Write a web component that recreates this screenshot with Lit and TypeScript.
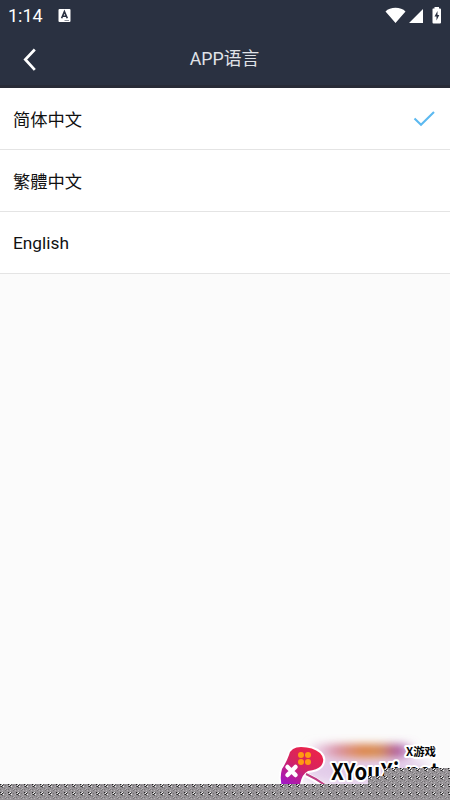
import { LitElement, html, css } from "lit";
import { customElement } from "lit/decorators.js";

@customElement("app-root")
export class AppRoot extends LitElement {
  static styles = css`
    :host {
      display: flex;
      flex-direction: column;
      position: relative;
      height: 800px;
      overflow: hidden;
      background: #fbfbfb;
      font-family: Roboto, "Noto Sans CJK SC", sans-serif;
      color: #111;
    }
    header { background: #2a3141; height: 88px; box-sizing: border-box; border-bottom: 3px solid #282b36; }
    .status { display: flex; height: 31px; align-items: center; padding: 0 8px; color: #fff; font-size: 18px; line-height: 32px; }
    .time { width: 50px; }
    .icons { margin-left: auto; margin-right: -8px; display: block; }
    .nav { display: grid; grid-template-columns: 60px 1fr 60px; height: 54px; align-items: center; }
    .title { text-align: center; font-size: 17.8px; line-height: 56px; color: #e0e3e8; margin-left: -1px; }
    .row { display: flex; align-items: center; justify-content: space-between; height: 62px; box-sizing: border-box; border-bottom: 1px solid #e4e4e4; background: #fff; padding: 0 13px; font-size: 17.3px; }
    .mark { position: absolute; left: 0; bottom: 0; }
    .brand { font-family: "Noto Sans CJK SC", sans-serif; font-weight: 700; fill: #050505; }
    svg { display: block; }
  `;

  render() {
    return html`
      <header>
        <div class="status">
          <span class="time">1:14</span>
          <svg width="13" height="14" viewBox="0 0 13 14">
            <rect x=".5" y="0" width="12" height="13" rx="1" fill="#fff" />
            <path d="M3.6 9.2 6.4 2.6 9.3 9.2M4.5 7.2H8.2" fill="none" stroke="#2a3141" stroke-width="1.6" />
            <path d="M6.5 11.5H11" stroke="#8b909b" />
          </svg>
          <svg class="icons" width="80" height="30" viewBox="0 0 80 30">
            <path d="M15.5 10.5C20 5.5 31 5.5 35.5 10.5L25.5 22Z M53 8V22H39Z" fill="#fff" />
            <path d="M64.5 6V7.5H63Q62.5 7.5 62.5 8.5V21.5Q62.5 22.5 63.5 22.5H70Q71 22.5 71 21.5V8.5Q71 7.5 70 7.5H69V6Z" fill="#fff" />
            <path d="M67.5 10 64.5 15.5H66.5V19.5L69.3 14H67.5Z" fill="#2a3141" />
          </svg>
        </div>
        <div class="nav">
          <svg width="60" height="54" viewBox="0 0 60 54"><path d="M34.8 17.5 25.3 27.5 34.8 37.8" fill="none" stroke="#fff" stroke-width="2.7" /></svg>
          <span class="title">APP语言</span>
        </div>
      </header>
      <div class="row"><span>简体中文</span>
        <svg width="24" height="18" viewBox="0 0 24 18"><path d="M1.5 8.5 8 14.8 21 2" fill="none" stroke="#5cb9f0" stroke-width="2.1" /></svg>
      </div>
      <div class="row"><span lang="zh-Hant">繁體中文</span></div>
      <div class="row"><span>English</span></div>
      <svg class="mark" width="450" height="72" viewBox="0 728 450 72">
        <defs>
          <filter id="soft" x="-30%" y="-100%" width="160%" height="300%"><feGaussianBlur stdDeviation="6 4" /></filter>
          <filter id="haze" x="-30%" y="-60%" width="160%" height="220%"><feGaussianBlur stdDeviation="7" /></filter>
          <linearGradient id="glow"><stop stop-color="#dfb4df" stop-opacity=".4" /><stop offset=".25" stop-color="#d890a5" /><stop offset=".5" stop-color="#dd8446" /><stop offset=".7" stop-color="#d58b55" /><stop offset=".88" stop-color="#a8509e" /><stop offset="1" stop-color="#b878ba" stop-opacity=".6" /></linearGradient>
          <linearGradient id="pad" x1=".8" y1="0" x2=".2" y2="1"><stop stop-color="#ee2348" /><stop offset=".45" stop-color="#d5245f" /><stop offset="1" stop-color="#9b18cf" /></linearGradient>
          <pattern id="grain" width="8" height="8" patternUnits="userSpaceOnUse">
            <rect width="8" height="8" fill="#979397" />
            <g shape-rendering="crispEdges">
              <path d="M0 0h1v1H0ZM2 1h1v1H2ZM1 2h1v1H1Z" fill="#222" />
              <path d="M3 0h1v1H3ZM0 2h1v1H0ZM2 3h1v1H2Z" fill="#5c5a5c" />
              <path d="M2 0h1v1H2ZM1 1h1v1H1ZM3 2h1v1H3Z" fill="#eee" />
              <path d="M4 4h1v1H4ZM6 5h1v1H6ZM5 6h1v1H5ZM0 5h1v1H0ZM5 1h1v1H5Z" fill="#777477" />
              <path d="M6 4h1v1H6ZM5 5h1v1H5ZM7 6h1v1H7ZM2 6h1v1H2ZM7 2h1v1H7Z" fill="#b5b2b5" />
            </g>
          </pattern>
        </defs>
        <ellipse cx="364" cy="770" rx="64" ry="18" fill="#d5b2e0" opacity=".65" filter="url(#haze)" />
        <rect x="312" y="744" width="98" height="14" fill="url(#glow)" filter="url(#soft)" />
        <path d="M289 755Q291 747 301 747Q313 747 320 753Q326 759 321 766Q317 770 308 771Q302 774 300 784L297 790H283Q279 779 282 769Q286 763 289 755Z" fill="url(#pad)" stroke="#fff" stroke-width="4" paint-order="stroke" />
        <path d="M306 775Q314 778 324 786" fill="none" stroke="#fff" stroke-width="5" />
        <path d="M306 774Q315 778 325 785" fill="none" stroke="#bd3d83" stroke-width="2" />
        <g fill="#ff9b12"><circle cx="301" cy="755" r="3" /><circle cx="308" cy="755" r="3" /><circle cx="301" cy="762" r="3" /><circle cx="308" cy="762" r="3" /></g>
        <path d="m287.5 767 8 8m0-8-8 8" stroke="#fff" stroke-width="4.5" stroke-linecap="round" />
        <text class="brand" x="331" y="780" font-size="23" textLength="108" lengthAdjust="spacingAndGlyphs" stroke="#fff" stroke-width="4" stroke-linejoin="round" paint-order="stroke">XYouXi.net</text>
        <text class="brand" x="406" y="756" font-size="11" textLength="30" lengthAdjust="spacingAndGlyphs" stroke="#fff" stroke-width="4" stroke-linejoin="round" paint-order="stroke">X游戏</text>
        <path d="M384 768H450V800H0V784H368V776H384Z" fill="url(#grain)" />
      </svg>
    `;
  }
}
